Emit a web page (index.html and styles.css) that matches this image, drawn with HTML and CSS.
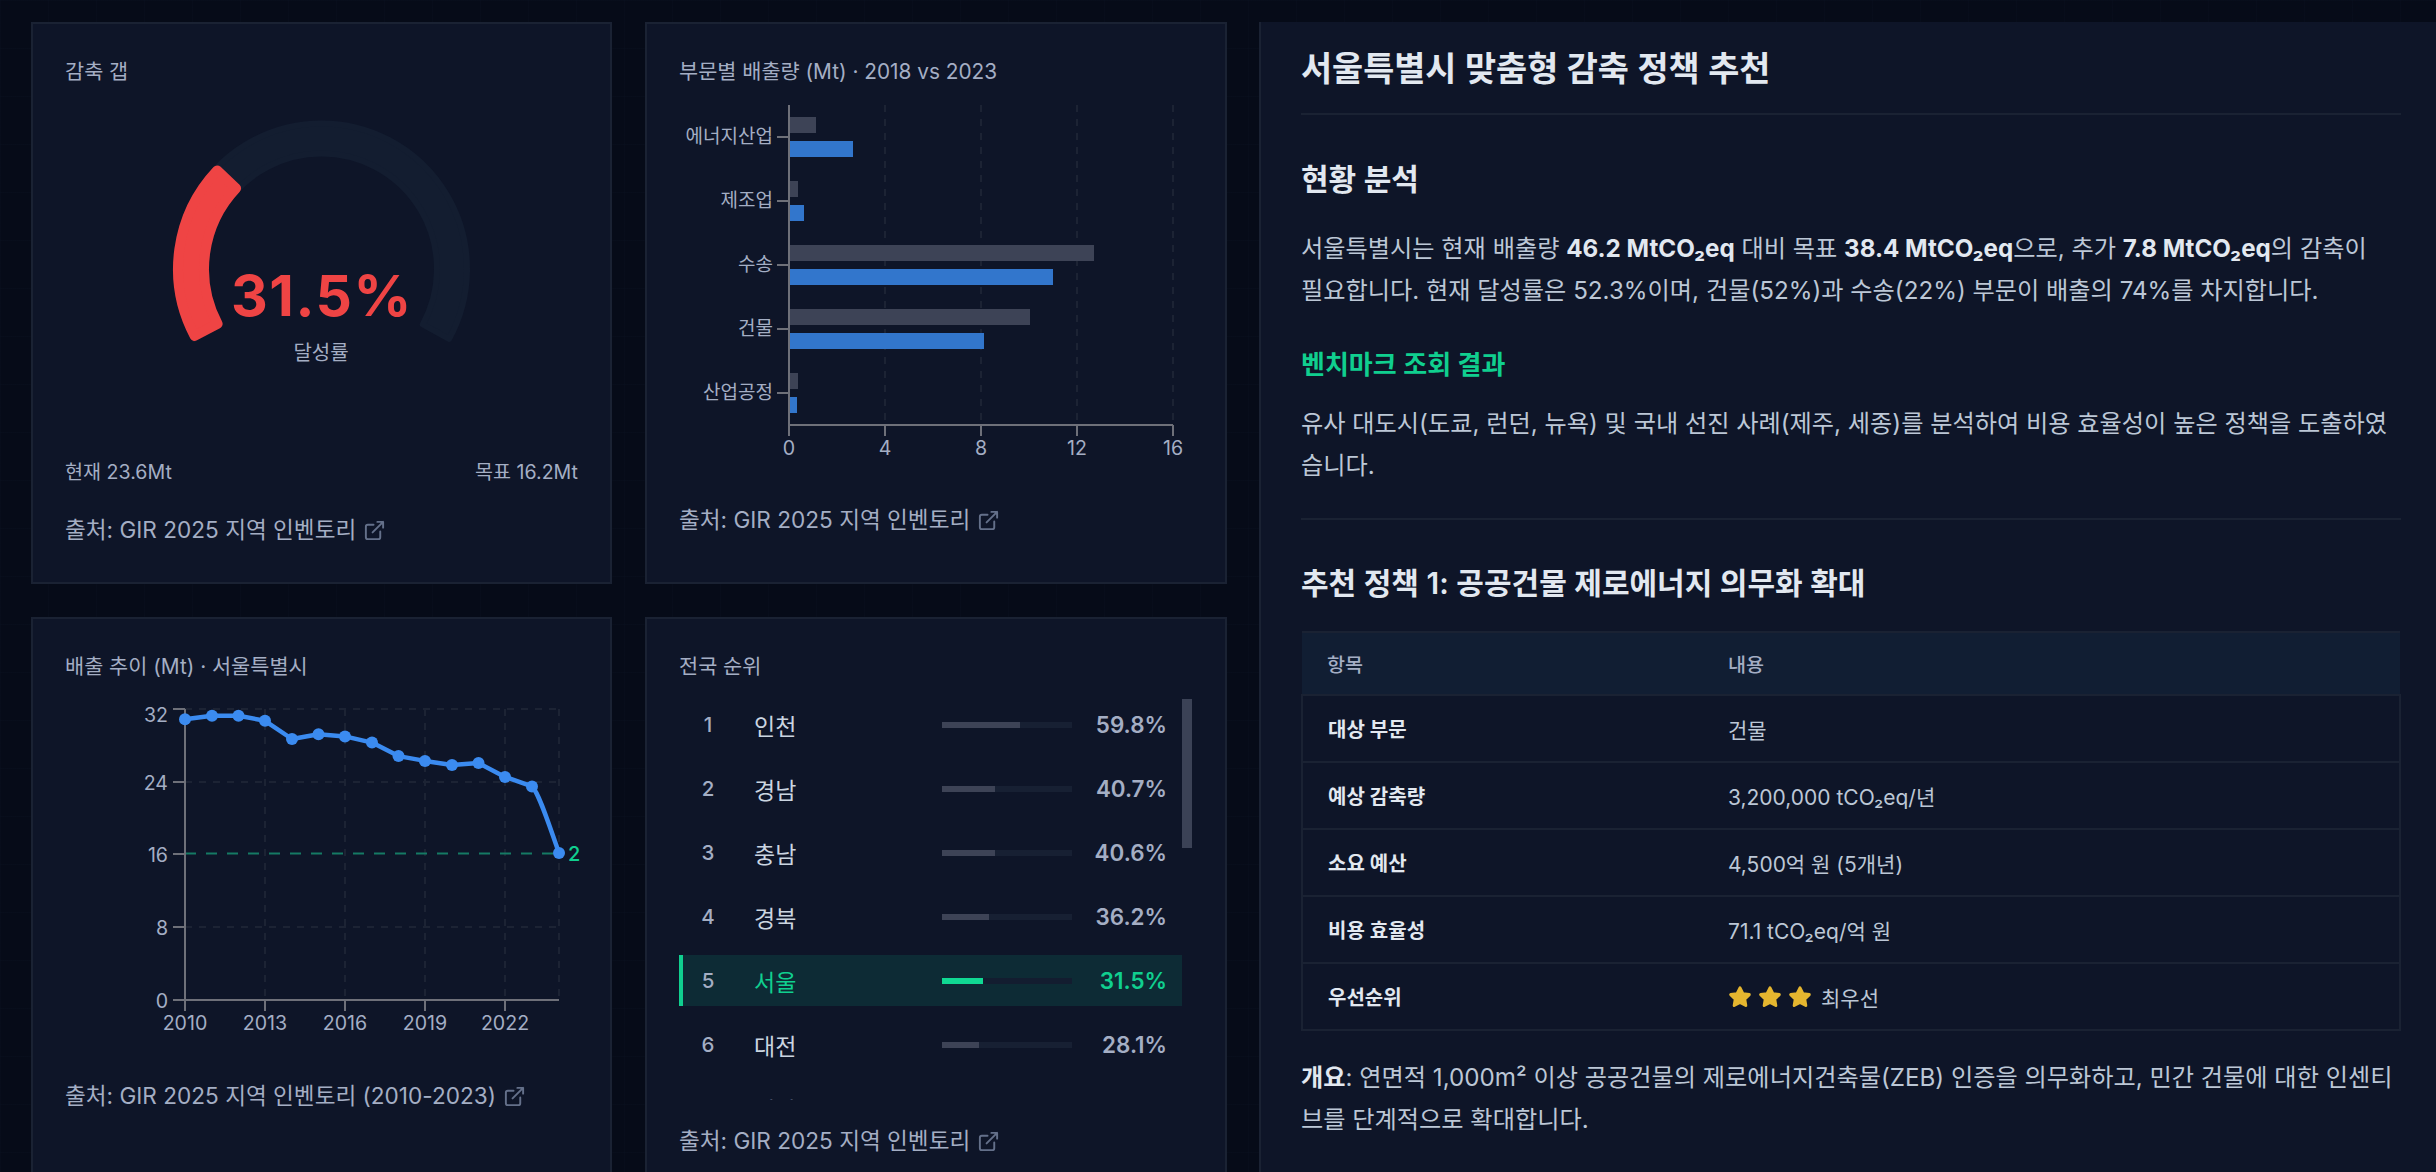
FILE: index.html
```html
<!DOCTYPE html>
<html lang="ko">
<head>
    <meta charset="UTF-8">
    <meta name="viewport" content="width=device-width, initial-scale=1.0">
    <title>서울특별시 감축 대시보드</title>
    <link rel="stylesheet" href="styles.css">
</head>
<body>

    <svg class="icon-defs" width="0" height="0">
        <symbol id="ext" viewBox="0 0 24 24">
            <path d="M15 3h6v6M10 14 21 3M18 13v6a2 2 0 0 1-2 2H5a2 2 0 0 1-2-2V8a2 2 0 0 1 2-2h6"/>
        </symbol>
        <symbol id="star" viewBox="0 0 24 24">
            <path d="M12 2.8l2.9 5.9 6.4.9-4.6 4.5 1.1 6.4L12 17.5l-5.8 3 1.1-6.4L2.7 9.6l6.4-.9z"/>
        </symbol>
    </svg>

    <div class="dashboard">
        <div class="cards">

            <div class="card">
                <div class="card-title">감축 갭</div>
                <svg class="chart gauge-chart" viewBox="65 95 515 345">
                    <path class="gauge-track" d="M193.9 338.9 A145.5 145.5 0 1 1 449.1 338.9 L422.8 324.4 A115.5 115.5 0 1 0 220.2 324.4 Z"/>
                    <path class="gauge-value" d="M194.6 335.9 A143.5 143.5 0 0 1 217.2 170.4 L236.1 188.3 A117.5 117.5 0 0 0 217.6 323.8 Z"/>
                    <text class="gauge-num" x="322" y="316">31.5%</text>
                    <text class="gauge-label" x="321" y="360">달성률</text>
                </svg>
                <div class="gauge-stats">
                    <span>현재 23.6Mt</span>
                    <span>목표 16.2Mt</span>
                </div>
                <div class="source">출처: GIR 2025 지역 인벤토리 <svg class="ext-icon"><use href="#ext"/></svg></div>
            </div>

            <div class="card">
                <div class="card-title">부문별 배출량 (Mt) · 2018 vs 2023</div>
                <svg class="chart bar-chart" viewBox="679 95 515 375">
                    <g class="grid">
                        <line x1="885" y1="105" x2="885" y2="425"/>
                        <line x1="981" y1="105" x2="981" y2="425"/>
                        <line x1="1077" y1="105" x2="1077" y2="425"/>
                        <line x1="1173" y1="105" x2="1173" y2="425"/>
                    </g>
                    <g class="bar-old">
                        <rect x="789" y="117" width="27" height="16"/>
                        <rect x="789" y="181" width="9" height="16"/>
                        <rect x="789" y="245" width="305" height="16"/>
                        <rect x="789" y="309" width="241" height="16"/>
                        <rect x="789" y="373" width="9" height="16"/>
                    </g>
                    <g class="bar-new">
                        <rect x="789" y="141" width="64" height="16"/>
                        <rect x="789" y="205" width="15" height="16"/>
                        <rect x="789" y="269" width="264" height="16"/>
                        <rect x="789" y="333" width="195" height="16"/>
                        <rect x="789" y="397" width="8" height="16"/>
                    </g>
                    <g class="axis">
                        <path d="M789 105V425H1173"/>
                        <path d="M777 137H789M777 201H789M777 265H789M777 329H789M777 393H789"/>
                        <path d="M789 425v11M885 425v11M981 425v11M1077 425v11M1173 425v11"/>
                    </g>
                    <g class="label label-end label-cat">
                        <text x="773" y="143">에너지산업</text>
                        <text x="773" y="207">제조업</text>
                        <text x="773" y="271">수송</text>
                        <text x="773" y="335">건물</text>
                        <text x="773" y="399">산업공정</text>
                    </g>
                    <g class="label label-mid">
                        <text x="789" y="455">0</text>
                        <text x="885" y="455">4</text>
                        <text x="981" y="455">8</text>
                        <text x="1077" y="455">12</text>
                        <text x="1173" y="455">16</text>
                    </g>
                </svg>
                <div class="source source-chart">출처: GIR 2025 지역 인벤토리 <svg class="ext-icon"><use href="#ext"/></svg></div>
            </div>

            <div class="card">
                <div class="card-title">배출 추이 (Mt) · 서울특별시</div>
                <svg class="chart line-chart" viewBox="65 690 515 356">
                    <g class="grid">
                        <path d="M185 709H559M185 782H559M185 927H559"/>
                        <path d="M265 709V1000M345 709V1000M425 709V1000M505 709V1000M559 709V1000"/>
                    </g>
                    <path class="target-line" d="M185 853.5H559"/>
                    <g class="axis">
                        <path d="M185 709V1000H559"/>
                        <path d="M173 709H185M173 782H185M173 854H185M173 927H185M173 1000H185"/>
                        <path d="M185 1000v11M265 1000v11M345 1000v11M425 1000v11M505 1000v11"/>
                    </g>
                    <path class="trend" d="M185 719.3L212 715.7L238.5 715.7L265 720.8L292 739L318.5 734.3L345 736.4L372 742.6L398.5 756.1L425 760.9L452 764.9L478.5 763.1L505 776.9L532 786.4C539 793 549 825 559 853"/>
                    <g class="trend-dots">
                        <circle cx="185" cy="719.3" r="6"/>
                        <circle cx="212" cy="715.7" r="6"/>
                        <circle cx="238.5" cy="715.7" r="6"/>
                        <circle cx="265" cy="720.8" r="6"/>
                        <circle cx="292" cy="739" r="6"/>
                        <circle cx="318.5" cy="734.3" r="6"/>
                        <circle cx="345" cy="736.4" r="6"/>
                        <circle cx="372" cy="742.6" r="6"/>
                        <circle cx="398.5" cy="756.1" r="6"/>
                        <circle cx="425" cy="760.9" r="6"/>
                        <circle cx="452" cy="764.9" r="6"/>
                        <circle cx="478.5" cy="763.1" r="6"/>
                        <circle cx="505" cy="776.9" r="6"/>
                        <circle cx="532" cy="786.4" r="6"/>
                        <circle cx="559" cy="853" r="6"/>
                    </g>
                    <text class="target-label" x="568" y="861">2</text>
                    <g class="label label-end">
                        <text x="168" y="722">32</text>
                        <text x="168" y="790">24</text>
                        <text x="168" y="862">16</text>
                        <text x="168" y="935">8</text>
                        <text x="168" y="1008">0</text>
                    </g>
                    <g class="label label-mid">
                        <text x="185" y="1030">2010</text>
                        <text x="265" y="1030">2013</text>
                        <text x="345" y="1030">2016</text>
                        <text x="425" y="1030">2019</text>
                        <text x="505" y="1030">2022</text>
                    </g>
                </svg>
                <div class="source source-chart">출처: GIR 2025 지역 인벤토리 (2010-2023) <svg class="ext-icon"><use href="#ext"/></svg></div>
            </div>

            <div class="card">
                <div class="card-title card-title-list">전국 순위</div>
                <div class="rank-box">
                    <div class="rank-list">
                        <div class="rank-row"><span class="rank-no">1</span><span class="rank-name">인천</span><span class="rank-track"><span class="rank-fill" style="width: 59.8%"></span></span><span class="rank-pct">59.8%</span></div>
                        <div class="rank-row"><span class="rank-no">2</span><span class="rank-name">경남</span><span class="rank-track"><span class="rank-fill" style="width: 40.7%"></span></span><span class="rank-pct">40.7%</span></div>
                        <div class="rank-row"><span class="rank-no">3</span><span class="rank-name">충남</span><span class="rank-track"><span class="rank-fill" style="width: 40.6%"></span></span><span class="rank-pct">40.6%</span></div>
                        <div class="rank-row"><span class="rank-no">4</span><span class="rank-name">경북</span><span class="rank-track"><span class="rank-fill" style="width: 36.2%"></span></span><span class="rank-pct">36.2%</span></div>
                        <div class="rank-row active"><span class="rank-no">5</span><span class="rank-name">서울</span><span class="rank-track"><span class="rank-fill" style="width: 31.5%"></span></span><span class="rank-pct">31.5%</span></div>
                        <div class="rank-row"><span class="rank-no">6</span><span class="rank-name">대전</span><span class="rank-track"><span class="rank-fill" style="width: 28.1%"></span></span><span class="rank-pct">28.1%</span></div>
                        <div class="rank-row"><span class="rank-no">7</span><span class="rank-name">전남</span><span class="rank-track"><span class="rank-fill" style="width: 27%"></span></span><span class="rank-pct">27.0%</span></div>
                    </div>
                    <div class="rank-thumb"></div>
                </div>
                <div class="source source-rank">출처: GIR 2025 지역 인벤토리 <svg class="ext-icon"><use href="#ext"/></svg></div>
            </div>

        </div>

        <div class="report">
            <h1>서울특별시 맞춤형 감축 정책 추천</h1>

            <h2 class="first">현황 분석</h2>
            <p class="lead">서울특별시는 현재 배출량 <strong>46.2 MtCO₂eq</strong> 대비 목표 <strong>38.4 MtCO₂eq</strong>으로, 추가 <strong>7.8 MtCO₂eq</strong>의 감축이 필요합니다. 현재 달성률은 52.3%이며, 건물(52%)과 수송(22%) 부문이 배출의 74%를 차지합니다.</p>

            <h3>벤치마크 조회 결과</h3>
            <p>유사 대도시(도쿄, 런던, 뉴욕) 및 국내 선진 사례(제주, 세종)를 분석하여 비용 효율성이 높은 정책을 도출하였습니다.</p>

            <hr>

            <h2>추천 정책 1: 공공건물 제로에너지 의무화 확대</h2>
            <table>
                <thead>
                    <tr><th class="col-key">항목</th><th>내용</th></tr>
                </thead>
                <tbody>
                    <tr><td>대상 부문</td><td>건물</td></tr>
                    <tr><td>예상 감축량</td><td>3,200,000 tCO₂eq/년</td></tr>
                    <tr><td>소요 예산</td><td>4,500억 원 (5개년)</td></tr>
                    <tr><td>비용 효율성</td><td>71.1 tCO₂eq/억 원</td></tr>
                    <tr>
                        <td>우선순위</td>
                        <td>
                            <span class="priority">
                                <svg class="star"><use href="#star"/></svg>
                                <svg class="star"><use href="#star"/></svg>
                                <svg class="star"><use href="#star"/></svg>
                                <span class="priority-text">최우선</span>
                            </span>
                        </td>
                    </tr>
                </tbody>
            </table>
            <p class="summary"><strong>개요</strong>: 연면적 1,000m² 이상 공공건물의 제로에너지건축물(ZEB) 인증을 의무화하고, 민간 건물에 대한 인센티브를 단계적으로 확대합니다.</p>
        </div>
    </div>

</body>
</html>
```

FILE: styles.css
```css
* {
    margin: 0;
    padding: 0;
    box-sizing: border-box;
}

html, body {
    height: 100%;
    overflow: hidden;
}

body {
    font-family: Inter, "Noto Sans CJK KR", sans-serif;
    background-color: #060b18;
    background-image:
        linear-gradient(rgba(120, 150, 200, 0.015) 1px, transparent 1px),
        linear-gradient(90deg, rgba(120, 150, 200, 0.015) 1px, transparent 1px);
    background-size: 48px 48px;
    color: #cbd5e1;
}

.icon-defs {
    position: absolute;
}

.dashboard {
    display: flex;
    height: 100%;
    padding-top: 22px;
    overflow: hidden;
}

.cards {
    display: grid;
    grid-template-columns: 581px 582px;
    grid-template-rows: 562px 562px;
    gap: 33px;
    margin-left: 31px;
    flex-shrink: 0;
}

.card {
    background: #0e1528;
    border: 2px solid #1a2233;
    padding: 34px 32px 0;
}

.card-title {
    font-size: 20.8px;
    line-height: 28px;
    color: #a4aec4;
    margin-bottom: 9px;
}

.card-title-list { margin-bottom: 18px; }

.chart {
    display: block;
    width: 515px;
}

.gauge-chart { height: 345px; }
.bar-chart { height: 375px; }
.line-chart { height: 356px; }

.gauge-track { fill: #131d30; stroke: #131d30; stroke-width: 6; stroke-linejoin: round; }
.gauge-value { fill: #ef4444; stroke: #ef4444; stroke-width: 10; stroke-linejoin: round; }

.gauge-num {
    font-size: 57px;
    font-weight: 700;
    fill: #ef4444;
    text-anchor: middle;
    letter-spacing: 1.5px;
}

.gauge-label {
    font-size: 20px;
    fill: #a4aec4;
    text-anchor: middle;
}

.gauge-stats {
    display: flex;
    justify-content: space-between;
    font-size: 19.6px;
    line-height: 28px;
    color: #a4aec4;
    margin-top: 18px;
}

.source {
    display: flex;
    align-items: center;
    gap: 7px;
    font-size: 22.6px;
    line-height: 28px;
    color: #a4aec4;
    margin-top: 30px;
}

.source-chart { margin-top: 36px; }
.source-rank { margin-top: 27px; }

.ext-icon {
    width: 23px;
    height: 23px;
    fill: none;
    stroke: #64708a;
    stroke-width: 2;
    stroke-linecap: round;
    stroke-linejoin: round;
}

.grid { fill: none; stroke: #1c2334; stroke-width: 2; stroke-dasharray: 7 7; }
.axis { fill: none; stroke: #6e7079; stroke-width: 2; }
.bar-old { fill: #3d4356; }
.bar-new { fill: #3276cc; }

.label { font-size: 19.6px; fill: #a4aec4; }
.label-cat { font-size: 19px; }
.label-end { text-anchor: end; }
.label-mid { text-anchor: middle; }

.target-line { fill: none; stroke: #157a64; stroke-width: 2; stroke-dasharray: 11 10; }
.target-label { font-size: 20px; font-weight: 500; fill: #10cf8f; }
.trend { fill: none; stroke: #3b8bf0; stroke-width: 4.5; stroke-linejoin: round; }
.trend-dots { fill: #3b8bf0; }

.rank-box {
    position: relative;
    height: 401px;
    padding-right: 10px;
    width: 513px;
}

.rank-list {
    height: 401px;
    overflow: hidden;
}

.rank-thumb {
    position: absolute;
    top: 0;
    right: 0;
    width: 10px;
    height: 149px;
    background: #3b4256;
}

.rank-row {
    display: grid;
    grid-template-columns: 71px 188px 130px 1fr;
    align-items: center;
    height: 51px;
    margin-bottom: 13px;
    padding-right: 15px;
    border-left: 4px solid transparent;
}

.rank-no {
    font-size: 20.5px;
    font-weight: 500;
    color: #a4aec4;
    text-align: center;
    padding-right: 21px;
}

.rank-name { font-size: 23px; color: #cbd5e1; }

.rank-track {
    display: block;
    height: 6px;
    background: #172033;
}

.rank-fill {
    display: block;
    height: 100%;
    background: #3d4356;
}

.rank-pct {
    font-size: 22.4px;
    font-weight: 600;
    color: #a4aec4;
    text-align: right;
}

.rank-row.active {
    background: #0d2b35;
    border-left-color: #10cf8f;
}

.rank-row.active .rank-name,
.rank-row.active .rank-pct { color: #10cf8f; }
.rank-row.active .rank-fill { background: #10d993; }
.rank-row.active .rank-track { background: #131d30; }

.report {
    flex: 1;
    margin-left: 32px;
    background: #0e1528;
    border-left: 2px solid #1a2233;
    padding: 24px 35px 0 40px;
    overflow: hidden;
}

h1 {
    font-size: 33.8px;
    font-weight: 600;
    line-height: 46px;
    color: #e2e8f0;
    padding-bottom: 21px;
    border-bottom: 2px solid #1a2233;
}

h2 {
    font-size: 30px;
    font-weight: 600;
    line-height: 40px;
    color: #e2e8f0;
    margin-top: 43px;
}

h2.first { margin-top: 44px; }

h3 {
    font-size: 26px;
    font-weight: 600;
    line-height: 36px;
    color: #10cf8f;
    margin-top: 35px;
}

p {
    font-size: 24.2px;
    line-height: 42px;
    color: #bcc7d6;
    margin-top: 20px;
}

p.lead { margin-top: 29px; word-break: keep-all; }
p strong { color: #e2e8f0; font-weight: 700; }
p.summary { margin-top: 26px; }

hr {
    border: 0;
    height: 2px;
    background: #1a2233;
    margin-top: 31px;
}

table {
    width: 1100px;
    margin-top: 28px;
    border-collapse: collapse;
    table-layout: fixed;
}

th, td {
    border: 2px solid #1a2233;
    border-width: 2px 0;
    padding: 0 25px;
    text-align: left;
    font-size: 21px;
    height: 67px;
}

th {
    height: 63px;
    font-size: 19.6px;
    font-weight: 500;
    color: #a4aec4;
    background: #111e33;
}

th.col-key { width: 401px; }

td:first-child { font-size: 20px; font-weight: 600; color: #e2e8f0; border-left-width: 2px; }
td:last-child { color: #bcc7d6; border-right-width: 2px; }

.priority {
    display: flex;
    align-items: center;
    gap: 6px;
}

.star {
    width: 24px;
    height: 24px;
    fill: #e5b62f;
    stroke: #e5b62f;
    stroke-width: 3;
    stroke-linejoin: round;
}

.priority-text { margin-left: 3px; }
```
